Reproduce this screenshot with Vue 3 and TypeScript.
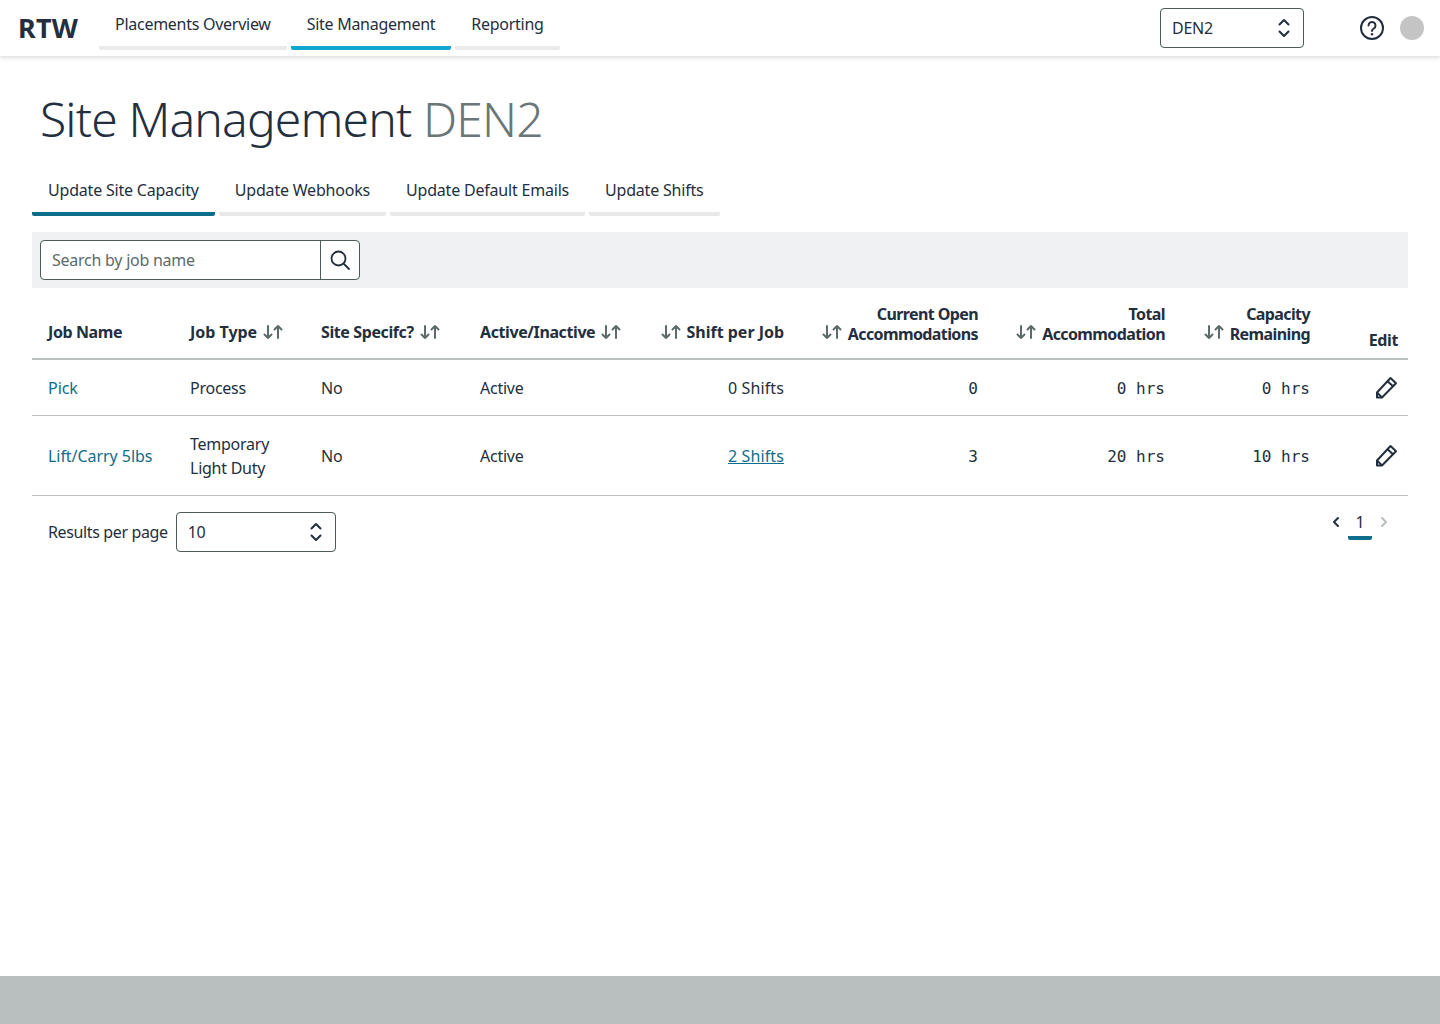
<script setup lang="ts">
interface Col { label: string[]; sort: boolean; right: boolean; width: number; loose?: boolean }
const columns: Col[] = [
  { label: ['Job Name'], sort: false, right: false, width: 142 },
  { label: ['Job Type'], sort: true, right: false, width: 131, loose: true },
  { label: ['Site Specifc?'], sort: true, right: false, width: 159 },
  { label: ['Active/Inactive'], sort: true, right: false, width: 181 },
  { label: ['Shift per Job'], sort: true, right: true, width: 155, loose: true },
  { label: ['Current Open', 'Accommodations'], sort: true, right: true, width: 194 },
  { label: ['Total', 'Accommodation'], sort: true, right: true, width: 187 },
  { label: ['Capacity', 'Remaining'], sort: true, right: true, width: 145 },
]
const rows = [
  { name: 'Pick', type: ['Process'], site: 'No', active: 'Active', shifts: '0 Shifts', link: false, open: '0', total: '0 hrs', cap: '0 hrs' },
  { name: 'Lift/Carry 5lbs', type: ['Temporary', 'Light Duty'], site: 'No', active: 'Active', shifts: '2 Shifts', link: true, open: '3', total: '20 hrs', cap: '10 hrs' },
]
const nav = [
  { t: 'Placements Overview', on: false },
  { t: 'Site Management', on: true },
  { t: 'Reporting', on: false },
]
const tabs = [
  { t: 'Update Site Capacity', on: true },
  { t: 'Update Webhooks', on: false },
  { t: 'Update Default Emails', on: false },
  { t: 'Update Shifts', on: false },
]
</script>

<template>
  <div class="page">
    <header class="topbar">
      <div class="logo">RTW</div>
      <nav class="nav">
        <a v-for="n in nav" :key="n.t" class="nav-item" :class="{ on: n.on }">{{ n.t }}</a>
      </nav>
      <div class="spacer"></div>
      <div class="select site-select">
        <span>DEN2</span>
        <svg class="chev" width="12" height="20" viewBox="0 0 12 20" fill="none" stroke="#232f3e" stroke-width="2" stroke-linecap="round" stroke-linejoin="round"><path d="M1.500 6.500 6 2l4.500 4.500M1.500 13.500 6 18l4.500-4.500"/></svg>
      </div>
      <svg class="help" width="24" height="24" viewBox="0 0 24 24" fill="none" stroke="#232f3e" stroke-width="2"><circle cx="12" cy="12" r="11"/><path d="M8.500 9.500a3.500 3.500 0 1 1 5.300 3c-1.200.7-1.800 1.300-1.800 2.500" stroke-linecap="round"/><circle cx="12" cy="18.300" r="1.200" fill="#232f3e" stroke="none"/></svg>
      <div class="avatar"></div>
    </header>

    <main class="main">
      <h1 class="title">Site Management <span class="muted">DEN2</span></h1>
      <div class="tabs">
        <a v-for="t in tabs" :key="t.t" class="tab" :class="{ on: t.on }">{{ t.t }}</a>
      </div>

      <div class="toolbar">
        <div class="search">
          <span class="placeholder">Search by job name</span>
          <button class="search-btn">
            <svg width="20" height="20" viewBox="0 0 20 20" fill="none" stroke="#232f3e" stroke-width="1.800" stroke-linecap="round"><circle cx="8.500" cy="8.500" r="7"/><path d="M13.500 13.500 19 19"/></svg>
          </button>
        </div>
      </div>

      <table class="table">
        <colgroup>
          <col v-for="c in columns" :key="c.label[0]" :style="{ width: c.width + 'px' }" />
          <col style="width: 82px" />
        </colgroup>
        <thead>
          <tr>
            <th v-for="c in columns" :key="c.label[0]">
              <div class="th-inner" :class="{ rev: c.right }">
                <span class="th-label" :class="{ two: c.label.length > 1, loose: c.loose }"><span v-for="l in c.label" :key="l" class="line">{{ l }}</span></span>
                <svg v-if="c.sort" class="sort" width="20" height="16" viewBox="0 0 20 16" fill="none" stroke="#5c6a6a" stroke-width="2" stroke-linecap="round" stroke-linejoin="round"><path d="M5 2v12M1.500 10.500 5 14l3.500-3.500"/><path d="M15 14V2M11.500 5.500 15 2l3.500 3.500"/></svg>
              </div>
            </th>
            <th class="edit-head">Edit</th>
          </tr>
        </thead>
        <tbody>
          <tr v-for="r in rows" :key="r.name">
            <td><a class="link plain">{{ r.name }}</a></td>
            <td><span v-for="l in r.type" :key="l" class="line">{{ l }}</span></td>
            <td>{{ r.site }}</td>
            <td>{{ r.active }}</td>
            <td class="right shifts"><a v-if="r.link" class="link">{{ r.shifts }}</a><template v-else>{{ r.shifts }}</template></td>
            <td class="right mono">{{ r.open }}</td>
            <td class="right mono">{{ r.total }}</td>
            <td class="right mono">{{ r.cap }}</td>
            <td class="edit-cell">
              <svg width="24" height="24" viewBox="0 0 24 24" fill="none" stroke="#232f3e" stroke-width="2" stroke-linejoin="round"><path d="M3 16.500 16.500 2 22 7.200 8 21.500 3 21.500z"/><path d="M3 16.500 8 21.500M13.500 5.300l5.500 5"/></svg>
            </td>
          </tr>
        </tbody>
      </table>

      <div class="pager-row">
        <div class="per-page">
          <span class="per-label">Results per page</span>
          <div class="select count-select">
            <span>10</span>
            <svg class="chev" width="12" height="20" viewBox="0 0 12 20" fill="none" stroke="#232f3e" stroke-width="2" stroke-linecap="round" stroke-linejoin="round"><path d="M1.500 6.500 6 2l4.500 4.500M1.500 13.500 6 18l4.500-4.500"/></svg>
          </div>
        </div>
        <div class="pager">
          <svg width="8" height="12" viewBox="0 0 8 12" fill="none" stroke="#232f3e" stroke-width="2" stroke-linecap="round" stroke-linejoin="round"><path d="M6 2 2 6l4 4"/></svg>
          <span class="page-num">1</span>
          <svg width="8" height="12" viewBox="0 0 8 12" fill="none" stroke="#b9bfbf" stroke-width="2" stroke-linecap="round" stroke-linejoin="round"><path d="M2 2l4 4-4 4"/></svg>
        </div>
      </div>
    </main>

    <footer class="footer"></footer>
  </div>
</template>

<style scoped>
.page {
  width: 1440px;
  height: 1024px;
  display: flex;
  flex-direction: column;
  background: #fff;
  color: #232f3e;
  font-family: "Noto Sans", "Open Sans", sans-serif;
  font-size: 16px;
  line-height: 24px;
  letter-spacing: -0.25px;
  overflow: hidden;
}
.topbar {
  height: 56px;
  flex: none;
  display: flex;
  align-items: flex-start;
  padding-left: 18px;
  box-shadow: 0 2px 4px rgba(35, 47, 62, 0.16);
  box-sizing: border-box;
}
.logo {
  font-size: 27px;
  font-weight: 700;
  line-height: 56px;
  letter-spacing: 0.2px;
  width: 81px;
}
.nav { display: flex; gap: 4px; }
.nav-item {
  height: 50px;
  box-sizing: border-box;
  padding: 12px 16px 0;
  border-bottom: 4px solid #e8e9e9;
  border-radius: 0 0 2px 2px;
  letter-spacing: -0.27px;
}
.nav-item.on { border-bottom-color: #12a5cf; }
.spacer { flex: 1; }
.select {
  display: flex;
  align-items: center;
  justify-content: space-between;
  box-sizing: border-box;
  height: 40px;
  border: 1px solid #4f5b5b;
  border-radius: 4px;
  padding: 0 13px 0 11px;
  background: #fff;
}
.site-select { width: 144px; margin-top: 8px; }
.help { margin: 16px 0 0 56px; }
.avatar {
  width: 24px;
  height: 24px;
  border-radius: 50%;
  background: #c4c4c4;
  margin: 16px 16px 0 16px;
}
.main {
  flex: 1;
  padding: 0 32px;
  min-height: 0;
}
.title {
  margin: 31px 0 0 8px;
  font-size: 48px;
  line-height: 64px;
  font-weight: 300;
  letter-spacing: -0.85px;
}
.muted { color: #6b7676; }
.tabs { display: flex; gap: 4px; margin-top: 21px; }
.tab {
  height: 44px;
  box-sizing: border-box;
  padding: 6px 16px 0;
  border-bottom: 4px solid #e8e9e9;
  border-radius: 0 0 2px 2px;
  letter-spacing: -0.2px;
}
.tab.on { border-bottom-color: #0f6d8c; }
.toolbar {
  margin-top: 16px;
  height: 56px;
  background: #f0f1f2;
  padding: 8px;
  box-sizing: border-box;
}
.search {
  width: 320px;
  height: 40px;
  box-sizing: border-box;
  display: flex;
  align-items: center;
  background: #fff;
  border: 1px solid #4f5b5b;
  border-radius: 4px;
}
.placeholder { flex: 1; padding-left: 11px; color: #5c6a6a; }
.search-btn {
  width: 39px;
  height: 38px;
  padding: 0;
  background: none;
  border: none;
  border-left: 1px solid #4f5b5b;
  display: flex;
  align-items: center;
  justify-content: center;
}
.table {
  width: 1376px;
  table-layout: fixed;
  border-collapse: collapse;
}
th {
  height: 71px;
  padding: 0 16px 14px;
  font-weight: 700;
  text-align: left;
  vertical-align: bottom;
  border-bottom: 2px solid #b9bfbf;
  box-sizing: border-box;
  letter-spacing: -0.4px;
}
.th-inner { display: flex; align-items: flex-end; gap: 6px; }
.th-inner.rev { flex-direction: row-reverse; justify-content: flex-start; text-align: right; }
.th-label.two { line-height: 20px; letter-spacing: -0.6px; }
.th-label.loose { letter-spacing: -0.02px; }
.sort { flex: none; margin-bottom: 4px; }
.line { display: block; white-space: nowrap; }
.right { text-align: right; }
th.edit-head {
  text-align: right;
  padding: 0 10px 6px 0;
}
td {
  padding: 16px 16px 15px;
  border-bottom: 1px solid #b9bfbf;
  box-sizing: border-box;
  vertical-align: middle;
}
td.shifts { letter-spacing: 0.12px; }
td.mono {
  font-family: "DejaVu Sans Mono", monospace;
  letter-spacing: 0;
  padding: 17px 16px 14px;
}
td.edit-cell { padding: 0 10px 0 0; text-align: right; }
.edit-cell svg { display: block; margin-left: auto; }
.link { color: #0f6d8c; text-decoration: underline; }
.link.plain { text-decoration: none; letter-spacing: -0.05px; }
.pager-row {
  display: flex;
  justify-content: space-between;
  align-items: flex-start;
  padding: 16px 16px 0;
}
.per-page { display: flex; align-items: center; gap: 8px; }
.per-label { letter-spacing: -0.37px; }
.count-select { width: 160px; }
.pager {
  display: flex;
  align-items: flex-start;
  gap: 8px;
  margin-right: 4px;
}
.pager svg { margin-top: 4px; }
.page-num {
  width: 24px;
  height: 26px;
  margin-top: -2px;
  text-align: center;
  border-bottom: 4px solid #0f6d8c;
  border-radius: 0 0 2px 2px;
}
.footer { height: 48px; flex: none; background: #b9bfbf; }
</style>

<style>
body { margin: 0; }
</style>
